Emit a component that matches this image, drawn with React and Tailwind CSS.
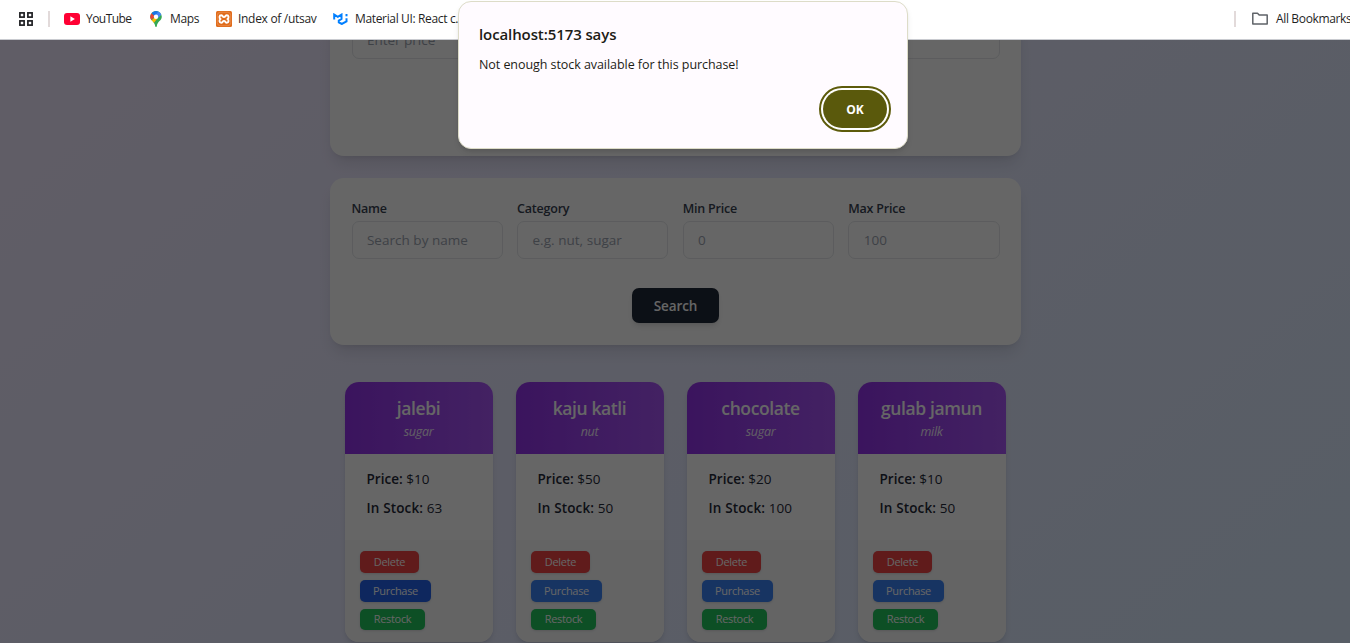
const products = [
  { name: "jalebi", category: "sugar", price: "$10", stock: 63, active: true },
  { name: "kaju katli", category: "nut", price: "$50", stock: 50 },
  { name: "chocolate", category: "sugar", price: "$20", stock: 100 },
  { name: "gulab jamun", category: "milk", price: "$10", stock: 50 },
];

const filters = [
  { label: "Name", placeholder: "Search by name" },
  { label: "Category", placeholder: "e.g. nut, sugar" },
  { label: "Min Price", placeholder: "0" },
  { label: "Max Price", placeholder: "100" },
];

const inputClass =
  "block h-[38px] w-full rounded-[7px] border border-[#e5e7eb] bg-transparent px-[14.4px] text-[13.5px] placeholder:text-[#9ca3af]";

function BookmarksBar() {
  return (
    <header className="flex h-10 items-center border-b border-[#c9cbd0] bg-white pb-[2px] text-[12px] tracking-[-0.35px] text-[#1f1f1f]">
      <svg className="ml-[19px] mt-px size-[14px] shrink-0" viewBox="0 0 14 14" fill="none" stroke="#202124" strokeWidth="1.7">
        <rect x="0.9" y="0.9" width="4.2" height="4.2" />
        <rect x="8.9" y="0.9" width="4.2" height="4.2" />
        <rect x="0.9" y="8.9" width="4.2" height="4.2" />
        <rect x="8.9" y="8.9" width="4.2" height="4.2" />
      </svg>
      <span className="ml-[15px] h-4 w-[2px] shrink-0 bg-[#e2dada]" />
      <div className="ml-[14px] flex w-[86px] shrink-0 items-center gap-[6px]">
        <svg className="h-3 w-4 shrink-0" viewBox="0 0 16 12">
          <rect width="16" height="12" rx="3" fill="#ff0033" />
          <path d="M6.4 3.3v5.4L10.9 6z" fill="#fff" />
        </svg>
        <span className="whitespace-nowrap tracking-[-0.55px]">YouTube</span>
      </div>
      <div className="flex w-[66px] shrink-0 items-center gap-[8px]">
        <svg className="h-4 w-3 shrink-0" viewBox="0 0 12 16">
          <clipPath id="pin">
            <path d="M6 0a5.8 5.8 0 0 0-5.8 5.8C.2 9.6 4.6 10.5 5.2 15.2a.8.8 0 0 0 1.6 0C7.4 10.5 11.8 9.6 11.8 5.8A5.8 5.8 0 0 0 6 0z" />
          </clipPath>
          <g clipPath="url(#pin)">
            <path d="M0 0h12v16H0z" fill="#34a853" />
            <path d="M-1 12L6.5 4.5 8.5 6 3 13z" fill="#fbbc04" />
            <path d="M0 1l5 4.5-4.5 4H0z" fill="#ea4335" />
            <path d="M1 1.5L4 0h5l-4 5.5z" fill="#1a73e8" />
            <path d="M8.5 0H12v3L7.5 7.5 5 5z" fill="#4285f4" />
          </g>
          <circle cx="6" cy="5.7" r="2.2" fill="#fff" />
        </svg>
        <span className="whitespace-nowrap">Maps</span>
      </div>
      <div className="flex w-[117px] shrink-0 items-center gap-[6px]">
        <svg className="size-4 shrink-0" viewBox="0 0 16 16">
          <rect width="16" height="16" rx="1.5" fill="#e06c1c" />
          <rect x="1.3" y="1.3" width="13.4" height="13.4" rx="3" fill="none" stroke="#efa36c" strokeWidth="0.5" />
          <path d="M4.6 8C2.900 7.200 3.100 4.200 5.200 4.200c1.500 0 1.300 1.900 2.800 1.900s1.300-1.900 2.800-1.900c2.100 0 2.300 3 .6 3.800 1.700.8 1.500 3.800-.6 3.800-1.500 0-1.300-1.900-2.800-1.900s-1.300 1.900-2.800 1.900c-2.100 0-2.300-3-.6-3.800z" fill="none" stroke="#fff" strokeWidth="1.900" strokeLinejoin="round" />
        </svg>
        <span className="whitespace-nowrap tracking-[-0.3px]">Index of /utsav</span>
      </div>
      <div className="flex shrink-0 items-center gap-[7px]">
        <svg className="h-3 w-[15px] shrink-0" viewBox="0 0 15 12" fill="none" stroke="#007fff" strokeWidth="2">
          <path d="M1.200 6.500V1.600l3.600 2.300L8.500 1.600V6L5.800 7.600v1.800L8.800 11l4.700-2.600V5.200" />
          <path d="M13.500 1v2.300" />
        </svg>
        <span className="whitespace-nowrap">Material UI: React c...</span>
      </div>
      <div className="ml-auto flex w-[116px] shrink-0 items-center overflow-hidden">
        <span className="h-4 w-[2px] shrink-0 bg-[#e2dada]" />
        <svg className="ml-4 h-[13px] w-4 shrink-0" viewBox="0 0 16 13" fill="none" stroke="#5f6368" strokeWidth="1.5" strokeLinejoin="round">
          <path d="M.8 1.2h4.700l1.700 1.800h8v9H.8z" />
        </svg>
        <span className="ml-2 whitespace-nowrap">All Bookmarks</span>
      </div>
    </header>
  );
}

function ProductCard({ product }) {
  return (
    <article className="h-[260px] w-[148px] overflow-hidden rounded-[14px] bg-white shadow-[0_4px_6px_-1px_rgba(0,0,0,0.1),0_2px_4px_-2px_rgba(0,0,0,0.1)]">
      <div className="h-[72px] bg-linear-[to_right,#9333ea,#a855f7] pt-[14px] text-center text-white">
        <h2 className="whitespace-nowrap text-[17.5px] font-[650] leading-[25px] tracking-[-0.4px]">{product.name}</h2>
        <p className="pt-px text-[12.5px] italic leading-[20px] tracking-[-0.3px] opacity-90">{product.category}</p>
      </div>
      <div className="flex h-[86px] flex-col gap-[7px] px-[22px] pt-[14px] text-[13.5px] leading-[22px] text-[#1f2937]">
        <p><strong className="font-semibold tracking-[0.03px]">Price:</strong> {product.price}</p>
        <p><strong className="font-semibold tracking-[0.15px]">In Stock:</strong> {product.stock}</p>
      </div>
      <div className="flex h-[102px] flex-col items-start gap-[7px] bg-[#f9fafb] px-[15px] pt-[11px] text-[11px] tracking-[-0.3px] text-white">
        <button className="h-[22px] w-[59px] rounded-[5px] bg-[#ef4444] pl-px shadow">Delete</button>
        <button className={product.active ? "h-[22px] w-[71px] rounded-[5px] bg-[#2563eb] pl-px shadow" : "h-[22px] w-[71px] rounded-[5px] bg-[#3b82f6] pl-px shadow"}>Purchase</button>
        <button className="h-[21px] w-[65px] rounded-[5px] bg-[#22c55e] pl-px shadow">Restock</button>
      </div>
    </article>
  );
}

function AlertDialog() {
  return (
    <div role="alertdialog" className="absolute left-[458px] top-px flex h-[148px] w-[450px] flex-col rounded-[13px] border border-[#dddcc8] bg-[#fffbff] px-5 pt-5 text-[#1d1c16] shadow-md">
      <h1 className="text-[15px] font-[550] leading-6 tracking-[-0.1px]">localhost:5173 says</h1>
      <p className="mt-[9px] text-[12.5px] leading-5 tracking-[-0.06px]">Not enough stock available for this purchase!</p>
      <button className="mr-[-4px] mt-[11px] h-[46px] w-[72px] self-end rounded-full border-2 border-[#5d5b0b] bg-white p-[2px]">
        <span className="flex h-full items-center justify-center rounded-full bg-[#5a590c] pt-px text-[12px] font-bold text-white">OK</span>
      </button>
    </div>
  );
}

export default function App() {
  return (
    <div className="relative flex h-[643px] w-[1350px] flex-col overflow-hidden font-['Open_Sans','Noto_Sans',sans-serif]">
      <BookmarksBar />
      <main className="relative flex min-h-0 flex-1 flex-col items-center overflow-hidden bg-linear-[140deg,#f1e8ff,#dbeafe]">
        <section className="-mt-[19px] h-[135px] w-[691px] shrink-0 rounded-b-[14px] bg-white pl-[22px] pr-[21px] shadow-[0_10px_15px_-3px_rgba(0,0,0,0.1),0_4px_6px_-4px_rgba(0,0,0,0.1)]">
          <input className={inputClass} placeholder="Enter price" />
        </section>
        <section className="mt-[22px] flex h-[167px] w-[691px] shrink-0 flex-col items-center rounded-[14px] bg-white pl-[22px] pr-[21px] pt-[21px] shadow-[0_10px_15px_-3px_rgba(0,0,0,0.1),0_4px_6px_-4px_rgba(0,0,0,0.1)]">
          <div className="grid w-full grid-cols-4 gap-[14.4px]">
            {filters.map((f) => (
              <label key={f.label} className="text-[12.5px] font-[550] leading-[20px] tracking-[-0.22px] text-[#374151]">
                {f.label}
                <input className={inputClass + " mt-[2px] font-normal tracking-[0.03px]"} placeholder={f.placeholder} />
              </label>
            ))}
          </div>
          <button className="mt-[29px] h-[35px] w-[87px] rounded-[7px] bg-[#1f2937] pt-[2px] text-[13.5px] font-[650] tracking-[-0.1px] text-white shadow-md">Search</button>
        </section>
        <section className="mt-[37px] flex shrink-0 gap-[23px]">
          {products.map((p) => (
            <ProductCard key={p.name} product={p} />
          ))}
        </section>
        <div className="absolute inset-0 bg-black/60" />
      </main>
      <AlertDialog />
    </div>
  );
}
